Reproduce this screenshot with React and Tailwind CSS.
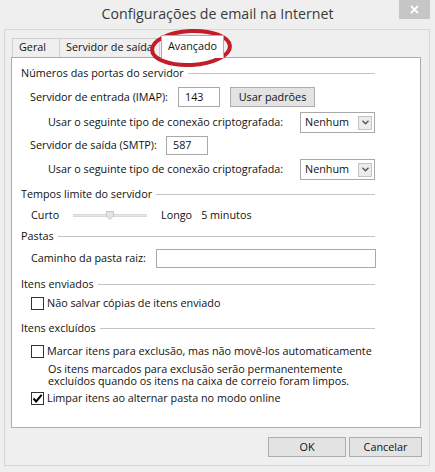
import React from "react";

const font = { fontFamily: '"Open Sans", "Noto Sans", sans-serif' };

function Header({ children, className = "" }) {
  return (
    <div className={"flex items-center h-[20px] pl-[9px] pr-[45px] " + className}>
      <span className="whitespace-nowrap">{children}</span>
      <div className="flex-1 h-px bg-[#c4c4c4] ml-[4px]" />
    </div>
  );
}

function Select({ className = "" }) {
  return (
    <div className={"flex items-center justify-between w-[75px] h-[21px] border border-[#a9a9a9] bg-white pl-[4px] pr-[2px] " + className}>
      <span>Nenhum</span>
      <div className="w-[14px] h-[14px] border border-[#c4c4c4] bg-[#ececec] flex items-center justify-center">
        <svg width="7" height="5" viewBox="0 0 7 5">
          <path d="M0.5 0.8 L3.5 3.8 L6.5 0.8" fill="none" stroke="#555" strokeWidth="1.3" />
        </svg>
      </div>
    </div>
  );
}

function Checkbox({ checked }) {
  return (
    <div className="w-[13px] h-[13px] border border-[#333] bg-white flex items-center justify-center shrink-0">
      {checked && (
        <svg width="11" height="11" viewBox="0 0 11 11">
          <path d="M1.5 5.5 L4.2 8.4 L9.6 1.8" fill="none" stroke="#000" strokeWidth="2" />
        </svg>
      )}
    </div>
  );
}

export default function App() {
  return (
    <div className="relative w-[435px] h-[472px] bg-[#efefef] text-[10.8px] text-[#111] leading-none overflow-hidden" style={font}>
      {/* title bar */}
      <div className="h-[29px] flex items-center justify-center text-[14.2px] text-[#3a3a3a] pb-[1px]">
        Configurações de email na Internet
      </div>
      <div className="absolute left-[399px] top-0 w-[31px] h-[19px] bg-[#c6c6c6] flex items-center justify-center">
        <svg width="9" height="9" viewBox="0 0 9 9">
          <path d="M1 1 L8 8 M8 1 L1 8" stroke="#fff" strokeWidth="1.8" />
        </svg>
      </div>

      {/* window frame */}
      <div className="ml-[4px] w-[426px] h-[437px] border border-[#d6d6d6] pt-[8px] pl-[6px]">
        {/* tabs */}
        <div className="flex items-end h-[19px] ml-[1px]">
          <div className="h-[19px] w-[48px] border border-b-0 border-[#cfcfcf] flex items-center pl-[6px] pb-[1px]">Geral</div>
          <div className="h-[19px] w-[100px] border border-b-0 border-l-0 border-[#cfcfcf] flex items-center pl-[6px] pb-[1px] whitespace-nowrap overflow-hidden">Servidor de saída</div>
          <div className="relative z-10 h-[23px] -mb-px bg-white border border-b-0 border-[#adadad] flex items-center px-[6px] pb-[2px] ml-[1px]">Avançado</div>
        </div>

        {/* panel */}
        <div className="w-[410px] h-[371px] border border-[#adadad] bg-white flex flex-col">
          <Header className="mt-[5px]">Números das portas do servidor</Header>

          <div className="flex items-center h-[20px] mt-[4px] pl-[18px]">
            <span className="w-[148px] whitespace-nowrap">Servidor de entrada (IMAP):</span>
            <div className="w-[42px] h-[20px] border border-[#a9a9a9] flex items-center pl-[6px]">143</div>
            <div className="ml-[10px] w-[85px] h-[20px] border border-[#adadad] bg-[#e3e3e3] flex items-center justify-center">Usar padrões</div>
          </div>

          <div className="flex items-center h-[21px] mt-[5px] pl-[36px]">
            <span className="w-[252px] whitespace-nowrap">Usar o seguinte tipo de conexão criptografada:</span>
            <Select />
          </div>

          <div className="flex items-center h-[19px] mt-[3px] pl-[18px]">
            <span className="w-[136px] whitespace-nowrap">Servidor de saída (SMTP):</span>
            <div className="w-[42px] h-[19px] border border-[#a9a9a9] flex items-center pl-[6px]">587</div>
          </div>

          <div className="flex items-center h-[21px] mt-[4px] pl-[36px]">
            <span className="w-[252px] whitespace-nowrap">Usar o seguinte tipo de conexão criptografada:</span>
            <Select />
          </div>

          <Header className="mt-[4px]">Tempos limite do servidor</Header>

          <div className="flex items-center h-[20px] mt-[1px] pl-[19px]">
            <span className="w-[42px]">Curto</span>
            <div className="relative w-[74px] h-[3px] bg-[#e6e6e6] border-y border-[#d9d9d9]">
              <svg className="absolute left-[33px] -top-[4px]" width="8" height="9" viewBox="0 0 8 9">
                <path d="M0.5 0.5 H7.5 V5 L4 8.5 L0.5 5 Z" fill="#e4e4e4" stroke="#c9c9c9" />
              </svg>
            </div>
            <span className="ml-[14px]">Longo</span>
            <span className="ml-[9px]">5 minutos</span>
          </div>

          <Header className="mt-[1px]">Pastas</Header>

          <div className="flex items-center h-[19px] mt-[3px] pl-[19px]">
            <span className="w-[125px] whitespace-nowrap">Caminho da pasta raiz:</span>
            <div className="w-[220px] h-[19px] border border-[#a9a9a9]" />
          </div>

          <Header className="mt-[6px]">Itens enviados</Header>

          <div className="flex items-center h-[18px] mt-0 pl-[19px] gap-[3px]">
            <Checkbox />
            <span className="whitespace-nowrap">Não salvar cópias de itens enviado</span>
          </div>

          <Header className="mt-[6px]">Itens excluídos</Header>

          <div className="flex items-center h-[20px] mt-[3px] pl-[19px] gap-[3px]">
            <Checkbox />
            <span className="whitespace-nowrap">Marcar itens para exclusão, mas não movê-los automaticamente</span>
          </div>

          <div className="mt-[2px] pl-[36px] leading-[12px]">
            <div className="h-[12px] whitespace-nowrap">Os itens marcados para exclusão serão permanentemente</div>
            <div className="h-[12px] whitespace-nowrap">excluídos quando os itens na caixa de correio foram limpos.</div>
          </div>

          <div className="flex items-center h-[20px] mt-[1px] pl-[19px] gap-[3px]">
            <Checkbox checked />
            <span className="whitespace-nowrap">Limpar itens ao alternar pasta no modo online</span>
          </div>
        </div>

        {/* buttons */}
        <div className="flex justify-end gap-[3px] mt-[9px] pr-[7px]">
          <div className="w-[78px] h-[20px] border border-[#adadad] bg-[#e3e3e3] flex items-center justify-center">OK</div>
          <div className="w-[73px] h-[20px] border border-[#adadad] bg-[#e3e3e3] flex items-center justify-center">Cancelar</div>
        </div>
      </div>

      {/* red ellipse annotation */}
      <svg className="absolute left-[148px] top-[27px]" width="88" height="42" viewBox="0 0 88 42">
        <ellipse cx="43" cy="21" rx="39" ry="17" fill="none" stroke="#c21d28" strokeWidth="4" transform="rotate(-3 43 21)" />
      </svg>
    </div>
  );
}
